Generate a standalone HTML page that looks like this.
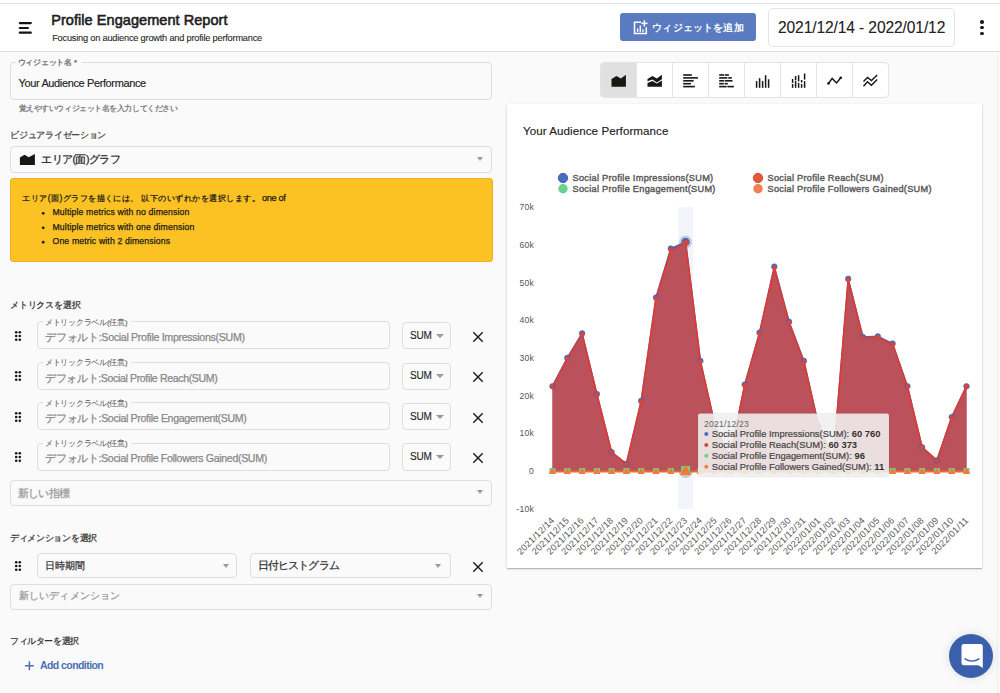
<!DOCTYPE html>
<html><head><meta charset="utf-8">
<style>
*{box-sizing:border-box;margin:0;padding:0}
html,body{width:1000px;height:693px;overflow:hidden}
body{background:#fafafa;font-family:"Liberation Sans",sans-serif;color:#222;position:relative}
.a{position:absolute}
.t{position:absolute;white-space:nowrap;line-height:1}
.box{position:absolute;border:1px solid #dedede;border-radius:4px}
.caret{position:absolute;width:0;height:0;border-left:4px solid transparent;border-right:4px solid transparent;border-top:4px solid #9a9a9a}
.dot{position:absolute;width:2.5px;height:2.5px;border-radius:50%;background:#1a1a1a}
</style></head><body>
<div class="a" style="left:0;top:0;width:1000px;height:52px;background:#fff"></div>
<div class="a" style="left:0;top:3px;width:1000px;height:1px;background:#e4e4e4"></div>
<div class="a" style="left:0;top:51px;width:1000px;height:1px;background:#dcdcdc"></div>
<svg class="a" style="left:0;top:0" width="50" height="50"><g stroke="#141414" stroke-width="2.2" stroke-linecap="round"><line x1="19.8" y1="23.1" x2="30.8" y2="23.1"/><line x1="19.8" y1="28" x2="27.9" y2="28"/><line x1="19.8" y1="32.7" x2="30.8" y2="32.7"/></g></svg>
<div class="t" style="left:51.2px;top:12.68px;font-size:14.5px;font-weight:400;color:#1f1f1f;letter-spacing:0.059px;-webkit-text-stroke:0.6px #1f1f1f;">Profile Engagement Report</div>
<div class="t" style="left:52.2px;top:34.28px;font-size:9.2px;font-weight:400;color:#2a2a2a;letter-spacing:-0.192px;-webkit-text-stroke:0.12px #2a2a2a;">Focusing on audience growth and profile performance</div>
<div class="a" style="left:620px;top:13px;width:136px;height:28px;background:#5a7bbf;border-radius:3px"></div>
<svg class="a" style="left:0;top:0" width="760" height="50"><g fill="none" stroke="#fff" stroke-width="1.5"><path d="M641 22.3H634.5V33.6H646.3V27.3"/></g><g fill="#fff"><rect x="643.6" y="20.3" width="1.5" height="6.2"/><rect x="641.3" y="22.6" width="6.2" height="1.5"/><rect x="636.9" y="28.5" width="1.4" height="3.4"/><rect x="639.6" y="25.6" width="1.4" height="6.3"/><rect x="642.3" y="29.3" width="1.4" height="2.6"/></g></svg>
<div class="t" style="left:652.2px;top:22.9px;font-size:10.0px;font-weight:700;color:#fff;letter-spacing:0.175px;">ウィジェットを追加</div>
<div class="box" style="left:768px;top:8px;width:187px;height:38.5px;background:#fff;border-color:#e4e4e4;border-radius:5px"></div>
<div class="t" style="left:778.0px;top:19.54px;font-size:15.6px;font-weight:400;color:#222;letter-spacing:-0.118px;-webkit-text-stroke:0.1px #222;">2021/12/14 - 2022/01/12</div>
<div class="a" style="left:980.3px;top:20.4px;width:3.4px;height:3.4px;border-radius:50%;background:#1e1e1e"></div>
<div class="a" style="left:980.3px;top:26px;width:3.4px;height:3.4px;border-radius:50%;background:#1e1e1e"></div>
<div class="a" style="left:980.3px;top:31.8px;width:3.4px;height:3.4px;border-radius:50%;background:#1e1e1e"></div>
<div class="a" style="left:997px;top:52px;width:1px;height:641px;background:#eeeeee"></div>
<div class="a" style="left:998px;top:52px;width:2px;height:641px;background:#fafafa"></div>
<div class="box" style="left:10px;top:62px;width:482px;height:38px"></div>
<div class="a" style="left:15.5px;top:60px;width:66px;height:5px;background:#fafafa"></div>
<div class="t" style="left:17.6px;top:58.9px;font-size:7.6px;font-weight:400;color:#666;letter-spacing:-0.225px;-webkit-text-stroke:0.25px #666;">ウィジェット名 *</div>
<div class="t" style="left:18.6px;top:77.65px;font-size:11.0px;font-weight:400;color:#222;letter-spacing:-0.375px;-webkit-text-stroke:0.15px #222;">Your Audience Performance</div>
<div class="t" style="left:18.6px;top:105.3px;font-size:7.8px;font-weight:400;color:#777;letter-spacing:-0.44px;-webkit-text-stroke:0.25px #777;">覚えやすいウィジェット名を入力してください</div>
<div class="t" style="left:10.4px;top:131.4px;font-size:8.6px;font-weight:400;color:#444;letter-spacing:-0.3px;-webkit-text-stroke:0.25px #444;">ビジュアライゼーション</div>
<div class="box" style="left:10px;top:146px;width:482px;height:27px"></div>
<svg class="a" style="left:0;top:140px" width="40" height="30"><polygon points="19.9,25 19.9,17.5 24.5,14.8 28.7,17.2 34.9,13.9 34.9,25" fill="#1a1712"/></svg>
<div class="t" style="left:41.4px;top:154.0px;font-size:10.5px;font-weight:400;color:#222;letter-spacing:-0.6px;-webkit-text-stroke:0.25px #222;">エリア(面)グラフ</div>
<div class="caret" style="left:476.8px;top:156.6px;border-left-width:3.7px;border-right-width:3.7px"></div>
<div class="a" style="left:10px;top:178px;width:483px;height:84px;background:#fcc224;border:1px solid #f3ad1c;border-radius:3px"></div>
<div class="t" style="left:22.25px;top:193.6px;font-size:8.3px;font-weight:400;color:#1a1a1a;letter-spacing:0.475px;-webkit-text-stroke:0.25px #1a1a1a;">エリア(面)グラフを描くには、</div>
<div class="t" style="left:141.2px;top:193.6px;font-size:8.3px;font-weight:400;color:#1a1a1a;letter-spacing:0.493px;-webkit-text-stroke:0.25px #1a1a1a;">以下のいずれかを選択します。</div>
<div class="t" style="left:262.0px;top:193.98px;font-size:9.2px;font-weight:400;color:#1a1a1a;letter-spacing:-0.35px;-webkit-text-stroke:0.25px #1a1a1a;">one of</div>
<svg class="a" style="left:0;top:200px" width="60" height="50"><circle cx="43.2" cy="13.300000000000011" r="1.35" fill="#1a1a1a"/><circle cx="43.2" cy="27.80000000000001" r="1.35" fill="#1a1a1a"/><circle cx="43.2" cy="42.19999999999999" r="1.35" fill="#1a1a1a"/></svg>
<div class="t" style="left:52.5px;top:208.35px;font-size:8.7px;font-weight:400;color:#1a1a1a;letter-spacing:0.136px;-webkit-text-stroke:0.25px #1a1a1a;">Multiple metrics with no dimension</div>
<div class="t" style="left:52.5px;top:222.91px;font-size:8.7px;font-weight:400;color:#1a1a1a;letter-spacing:0.136px;-webkit-text-stroke:0.25px #1a1a1a;">Multiple metrics with one dimension</div>
<div class="t" style="left:52.5px;top:237.3px;font-size:8.7px;font-weight:400;color:#1a1a1a;letter-spacing:0.136px;-webkit-text-stroke:0.25px #1a1a1a;">One metric with 2 dimensions</div>
<div class="t" style="left:10.0px;top:301.1px;font-size:8.8px;font-weight:400;color:#333;letter-spacing:-0.171px;-webkit-text-stroke:0.25px #333;">メトリクスを選択</div>
<svg class="a" style="left:7.70px;top:325.70px" width="20" height="20"><circle cx="8.2" cy="6.3" r="1.3" fill="#161616"/><circle cx="8.2" cy="10" r="1.3" fill="#161616"/><circle cx="8.2" cy="13.7" r="1.3" fill="#161616"/><circle cx="11.8" cy="6.3" r="1.3" fill="#161616"/><circle cx="11.8" cy="10" r="1.3" fill="#161616"/><circle cx="11.8" cy="13.7" r="1.3" fill="#161616"/></svg>
<div class="box" style="left:37px;top:321.4px;width:353px;height:28px"></div>
<div class="a" style="left:42.5px;top:320.2px;width:88px;height:4px;background:#fafafa"></div>
<div class="t" style="left:44.8px;top:318.8px;font-size:7.9px;font-weight:400;color:#555;letter-spacing:-0.219px;-webkit-text-stroke:0.05px #555;">メトリックラベル(任意)</div>
<div class="t" style="left:45.2px;top:332.19px;font-size:10.6px;font-weight:400;color:#888;letter-spacing:-0.295px;-webkit-text-stroke:0.25px #888;">デフォルト:Social Profile Impressions(SUM)</div>
<div class="box" style="left:402.3px;top:322.2px;width:48.7px;height:27.2px"></div>
<div class="t" style="left:410.0px;top:330.8px;font-size:10.0px;font-weight:400;color:#222;letter-spacing:-0.25px;-webkit-text-stroke:0.1px #222;">SUM</div>
<div class="caret" style="left:435.7px;top:333.8px"></div>
<svg class="a" style="left:471.5px;top:330.8px" width="12" height="12"><path d="M1.3 1.3L10.7 10.7M10.7 1.3L1.3 10.7" stroke="#1e1e1e" stroke-width="1.45"/></svg>
<svg class="a" style="left:7.70px;top:366.10px" width="20" height="20"><circle cx="8.2" cy="6.3" r="1.3" fill="#161616"/><circle cx="8.2" cy="10" r="1.3" fill="#161616"/><circle cx="8.2" cy="13.7" r="1.3" fill="#161616"/><circle cx="11.8" cy="6.3" r="1.3" fill="#161616"/><circle cx="11.8" cy="10" r="1.3" fill="#161616"/><circle cx="11.8" cy="13.7" r="1.3" fill="#161616"/></svg>
<div class="box" style="left:37px;top:361.8px;width:353px;height:28px"></div>
<div class="a" style="left:42.5px;top:360.6px;width:88px;height:4px;background:#fafafa"></div>
<div class="t" style="left:44.8px;top:359.2px;font-size:7.9px;font-weight:400;color:#555;letter-spacing:-0.219px;-webkit-text-stroke:0.05px #555;">メトリックラベル(任意)</div>
<div class="t" style="left:45.2px;top:372.59px;font-size:10.6px;font-weight:400;color:#888;letter-spacing:-0.379px;-webkit-text-stroke:0.25px #888;">デフォルト:Social Profile Reach(SUM)</div>
<div class="box" style="left:402.3px;top:362.6px;width:48.7px;height:27.2px"></div>
<div class="t" style="left:410.0px;top:371.2px;font-size:10.0px;font-weight:400;color:#222;letter-spacing:-0.25px;-webkit-text-stroke:0.1px #222;">SUM</div>
<div class="caret" style="left:435.7px;top:374.2px"></div>
<svg class="a" style="left:471.5px;top:371.2px" width="12" height="12"><path d="M1.3 1.3L10.7 10.7M10.7 1.3L1.3 10.7" stroke="#1e1e1e" stroke-width="1.45"/></svg>
<svg class="a" style="left:7.70px;top:406.50px" width="20" height="20"><circle cx="8.2" cy="6.3" r="1.3" fill="#161616"/><circle cx="8.2" cy="10" r="1.3" fill="#161616"/><circle cx="8.2" cy="13.7" r="1.3" fill="#161616"/><circle cx="11.8" cy="6.3" r="1.3" fill="#161616"/><circle cx="11.8" cy="10" r="1.3" fill="#161616"/><circle cx="11.8" cy="13.7" r="1.3" fill="#161616"/></svg>
<div class="box" style="left:37px;top:402.2px;width:353px;height:28px"></div>
<div class="a" style="left:42.5px;top:401.0px;width:88px;height:4px;background:#fafafa"></div>
<div class="t" style="left:44.8px;top:399.6px;font-size:7.9px;font-weight:400;color:#555;letter-spacing:-0.219px;-webkit-text-stroke:0.05px #555;">メトリックラベル(任意)</div>
<div class="t" style="left:45.2px;top:412.99px;font-size:10.6px;font-weight:400;color:#888;letter-spacing:-0.334px;-webkit-text-stroke:0.25px #888;">デフォルト:Social Profile Engagement(SUM)</div>
<div class="box" style="left:402.3px;top:403.0px;width:48.7px;height:27.2px"></div>
<div class="t" style="left:410.0px;top:411.6px;font-size:10.0px;font-weight:400;color:#222;letter-spacing:-0.25px;-webkit-text-stroke:0.1px #222;">SUM</div>
<div class="caret" style="left:435.7px;top:414.6px"></div>
<svg class="a" style="left:471.5px;top:411.6px" width="12" height="12"><path d="M1.3 1.3L10.7 10.7M10.7 1.3L1.3 10.7" stroke="#1e1e1e" stroke-width="1.45"/></svg>
<svg class="a" style="left:7.70px;top:446.90px" width="20" height="20"><circle cx="8.2" cy="6.3" r="1.3" fill="#161616"/><circle cx="8.2" cy="10" r="1.3" fill="#161616"/><circle cx="8.2" cy="13.7" r="1.3" fill="#161616"/><circle cx="11.8" cy="6.3" r="1.3" fill="#161616"/><circle cx="11.8" cy="10" r="1.3" fill="#161616"/><circle cx="11.8" cy="13.7" r="1.3" fill="#161616"/></svg>
<div class="box" style="left:37px;top:442.6px;width:353px;height:28px"></div>
<div class="a" style="left:42.5px;top:441.4px;width:88px;height:4px;background:#fafafa"></div>
<div class="t" style="left:44.8px;top:440.0px;font-size:7.9px;font-weight:400;color:#555;letter-spacing:-0.219px;-webkit-text-stroke:0.05px #555;">メトリックラベル(任意)</div>
<div class="t" style="left:45.2px;top:453.39px;font-size:10.6px;font-weight:400;color:#888;letter-spacing:-0.335px;-webkit-text-stroke:0.25px #888;">デフォルト:Social Profile Followers Gained(SUM)</div>
<div class="box" style="left:402.3px;top:443.4px;width:48.7px;height:27.2px"></div>
<div class="t" style="left:410.0px;top:452.0px;font-size:10.0px;font-weight:400;color:#222;letter-spacing:-0.25px;-webkit-text-stroke:0.1px #222;">SUM</div>
<div class="caret" style="left:435.7px;top:455.0px"></div>
<svg class="a" style="left:471.5px;top:452.0px" width="12" height="12"><path d="M1.3 1.3L10.7 10.7M10.7 1.3L1.3 10.7" stroke="#1e1e1e" stroke-width="1.45"/></svg>
<div class="box" style="left:10px;top:480px;width:482px;height:26px"></div>
<div class="t" style="left:18.4px;top:487.5px;font-size:10.5px;font-weight:400;color:#999;letter-spacing:-0.95px;-webkit-text-stroke:0.25px #999;">新しい指標</div>
<div class="caret" style="left:476.8px;top:490.4px;border-left-width:3.7px;border-right-width:3.7px"></div>
<div class="t" style="left:10.0px;top:533.6px;font-size:8.8px;font-weight:400;color:#333;letter-spacing:-0.312px;-webkit-text-stroke:0.25px #333;">ディメンションを選択</div>
<svg class="a" style="left:7.70px;top:556.00px" width="20" height="20"><circle cx="8.2" cy="6.3" r="1.3" fill="#161616"/><circle cx="8.2" cy="10" r="1.3" fill="#161616"/><circle cx="8.2" cy="13.7" r="1.3" fill="#161616"/><circle cx="11.8" cy="6.3" r="1.3" fill="#161616"/><circle cx="11.8" cy="10" r="1.3" fill="#161616"/><circle cx="11.8" cy="13.7" r="1.3" fill="#161616"/></svg>
<div class="box" style="left:37.4px;top:552.6px;width:200px;height:25.8px"></div>
<div class="t" style="left:44.8px;top:560.5px;font-size:10.2px;font-weight:400;color:#333;letter-spacing:0.066px;-webkit-text-stroke:0.25px #333;">日時期間</div>
<div class="caret" style="left:222.7px;top:563.8px;border-left-width:3.7px;border-right-width:3.7px"></div>
<div class="box" style="left:249.5px;top:552.5px;width:201.5px;height:25.8px"></div>
<div class="t" style="left:257.5px;top:560.0px;font-size:10.5px;font-weight:400;color:#333;letter-spacing:-0.815px;-webkit-text-stroke:0.25px #333;">日付ヒストグラム</div>
<div class="caret" style="left:435.4px;top:563.8px;border-left-width:3.7px;border-right-width:3.7px"></div>
<svg class="a" style="left:471.5px;top:560.6px" width="12" height="12"><path d="M1.3 1.3L10.7 10.7M10.7 1.3L1.3 10.7" stroke="#1e1e1e" stroke-width="1.45"/></svg>
<div class="box" style="left:10px;top:583.5px;width:482px;height:26px"></div>
<div class="t" style="left:18.8px;top:591.0px;font-size:10.2px;font-weight:400;color:#999;letter-spacing:0.156px;-webkit-text-stroke:0.25px #999;">新しいディメンション</div>
<div class="caret" style="left:476.8px;top:594px;border-left-width:3.7px;border-right-width:3.7px"></div>
<div class="t" style="left:10.0px;top:637.2px;font-size:8.8px;font-weight:400;color:#333;letter-spacing:-0.4px;-webkit-text-stroke:0.25px #333;">フィルターを選択</div>
<svg class="a" style="left:20px;top:657px" width="20" height="20"><path d="M9.4 4.2V13.2M4.9 8.7H13.9" stroke="#4a6fb5" stroke-width="1.5"/></svg>
<div class="t" style="left:40.0px;top:660.28px;font-size:10.5px;font-weight:700;color:#4a6fb5;letter-spacing:-0.567px;">Add condition</div>
<div class="a" style="left:600px;top:62px;width:288.5px;height:36.3px;background:#fff;border:1px solid #e3e3e3;border-radius:4px;overflow:hidden"><div style="position:absolute;left:0;top:0;width:36px;height:35px;background:#e0e0e0"></div>
<div style="position:absolute;left:35px;top:0;width:1px;height:35px;background:#e4e4e4"></div>
<div style="position:absolute;left:71px;top:0;width:1px;height:35px;background:#e4e4e4"></div>
<div style="position:absolute;left:107px;top:0;width:1px;height:35px;background:#e4e4e4"></div>
<div style="position:absolute;left:143px;top:0;width:1px;height:35px;background:#e4e4e4"></div>
<div style="position:absolute;left:179px;top:0;width:1px;height:35px;background:#e4e4e4"></div>
<div style="position:absolute;left:215px;top:0;width:1px;height:35px;background:#e4e4e4"></div>
<div style="position:absolute;left:251px;top:0;width:1px;height:35px;background:#e4e4e4"></div>
</div>
<svg class="a" style="left:0;top:0" width="1000" height="100" viewBox="0 0 1000 100">
<polygon points="611.5,86.7 611.5,78.9 616.4,75.9 620.9,78.6 625.9,74.8 625.9,86.7" fill="#1a1712"/>
<polygon points="647.5,78.9 652.4,75.9 656.9,78.6 661.9,74.8 661.9,79.3 656.9,82.6 652.4,79.5 647.5,81.3" fill="#1a1712"/>
<polygon points="647.5,83.1 652.4,81.1 656.9,83.6 661.9,80.6 661.9,86.7 647.5,86.7" fill="#1a1712"/>
<rect x="683.2" y="74.2" width="8.6" height="1.6" fill="#1a1712"/>
<rect x="683.2" y="77.1" width="14.7" height="1.6" fill="#1a1712"/>
<rect x="683.2" y="80.0" width="10.4" height="1.6" fill="#1a1712"/>
<rect x="683.2" y="82.9" width="7.7" height="1.6" fill="#1a1712"/>
<rect x="683.2" y="85.8" width="11.7" height="1.6" fill="#1a1712"/>
<rect x="719.2" y="74.2" width="5.0" height="1.6" fill="#1a1712"/>
<rect x="724.9" y="74.2" width="4.0" height="1.6" fill="#1a1712"/>
<rect x="719.2" y="77.1" width="8.2" height="1.6" fill="#1a1712"/>
<rect x="728.2" y="77.1" width="3.6" height="1.6" fill="#1a1712"/>
<rect x="719.2" y="80.0" width="5.0" height="1.6" fill="#1a1712"/>
<rect x="724.9" y="80.0" width="7.6" height="1.6" fill="#1a1712"/>
<rect x="719.2" y="82.9" width="4.6" height="1.6" fill="#1a1712"/>
<rect x="724.6" y="82.9" width="3.2" height="1.6" fill="#1a1712"/>
<rect x="719.2" y="85.8" width="7.5" height="1.6" fill="#1a1712"/>
<rect x="727.4" y="85.8" width="6.5" height="1.6" fill="#1a1712"/>
<rect x="755.85" y="81.1" width="1.5" height="6.7" fill="#1a1712"/>
<rect x="758.85" y="78.2" width="1.5" height="9.6" fill="#1a1712"/>
<rect x="761.85" y="81.1" width="1.5" height="6.7" fill="#1a1712"/>
<rect x="764.85" y="75.2" width="1.5" height="12.6" fill="#1a1712"/>
<rect x="767.85" y="79.3" width="1.5" height="8.5" fill="#1a1712"/>
<rect x="791.85" y="78.9" width="1.5" height="4.0" fill="#1a1712"/>
<rect x="791.85" y="84" width="1.5" height="3.8" fill="#1a1712"/>
<rect x="794.85" y="76" width="1.5" height="4.4" fill="#1a1712"/>
<rect x="794.85" y="81.1" width="1.5" height="6.7" fill="#1a1712"/>
<rect x="797.85" y="75.2" width="1.5" height="6.2" fill="#1a1712"/>
<rect x="797.85" y="82.9" width="1.5" height="4.9" fill="#1a1712"/>
<rect x="800.85" y="80" width="1.5" height="2.5" fill="#1a1712"/>
<rect x="800.85" y="84" width="1.5" height="3.8" fill="#1a1712"/>
<rect x="803.85" y="73.5" width="1.5" height="6.1" fill="#1a1712"/>
<rect x="803.85" y="81.1" width="1.5" height="6.7" fill="#1a1712"/>
<polyline points="828.4,83.5 832.2,78.4 836.5,82.9 840.8,77.7" fill="none" stroke="#1a1712" stroke-width="1.5"/>
<circle cx="828.4" cy="83.5" r="1.3" fill="#1a1712"/><circle cx="840.8" cy="77.7" r="1.3" fill="#1a1712"/>
<polyline points="863.5,81.6 867.5,77.5 871.4,80.6 877.2,75.1" fill="none" stroke="#1a1712" stroke-width="1.4"/>
<polyline points="863.5,86.3 867.5,81.8 871.4,85.2 877.2,79.5" fill="none" stroke="#1a1712" stroke-width="1.4"/>
</svg>
<div class="a" style="left:506.5px;top:104px;width:475.5px;height:464.2px;background:#fff;box-shadow:0 1px 1px 0 rgba(0,0,0,.2),0 1px 3px 0 rgba(0,0,0,.12)"></div>
<div class="t" style="left:523.0px;top:124.94px;font-size:11.6px;font-weight:400;color:#222;letter-spacing:0.058px;-webkit-text-stroke:0.15px #222;">Your Audience Performance</div>
<svg class="a" style="left:0;top:0" width="1000" height="693" viewBox="0 0 1000 693">
<rect x="678" y="207" width="15" height="302" fill="#f2f6fb"/>
<text x="534" y="210.0" text-anchor="end" font-size="8.6" fill="#555" letter-spacing="0.25">70k</text>
<text x="534" y="247.7" text-anchor="end" font-size="8.6" fill="#555" letter-spacing="0.25">60k</text>
<text x="534" y="285.5" text-anchor="end" font-size="8.6" fill="#555" letter-spacing="0.25">50k</text>
<text x="534" y="323.2" text-anchor="end" font-size="8.6" fill="#555" letter-spacing="0.25">40k</text>
<text x="534" y="360.9" text-anchor="end" font-size="8.6" fill="#555" letter-spacing="0.25">30k</text>
<text x="534" y="398.6" text-anchor="end" font-size="8.6" fill="#555" letter-spacing="0.25">20k</text>
<text x="534" y="436.3" text-anchor="end" font-size="8.6" fill="#555" letter-spacing="0.25">10k</text>
<text x="534" y="474.0" text-anchor="end" font-size="8.6" fill="#555" letter-spacing="0.25">0</text>
<text x="534" y="511.7" text-anchor="end" font-size="8.6" fill="#555" letter-spacing="0.25">-10k</text>
<polygon points="552.5,471 552.5,386.2 567.3,357.9 582.1,333.4 596.9,394.1 611.6,452.1 626.4,463.8 641.2,400.9 656.0,297.5 670.8,248.5 685.6,241.9 700.4,360.9 715.1,425.7 729.9,457.8 744.7,384.6 759.5,332.6 774.3,266.6 789.1,321.7 803.9,360.9 818.6,425.7 833.4,458.9 848.2,278.7 863.0,337.1 877.8,336.4 892.6,343.5 907.4,386.2 922.1,447.2 936.9,460.4 951.7,417.1 966.5,386.2 966.5,471" fill="#bb525b"/>
<polyline points="552.5,386.2 567.3,357.9 582.1,333.4 596.9,394.1 611.6,452.1 626.4,463.8 641.2,400.9 656.0,297.5 670.8,248.5 685.6,241.9 700.4,360.9 715.1,425.7 729.9,457.8 744.7,384.6 759.5,332.6 774.3,266.6 789.1,321.7 803.9,360.9 818.6,425.7 833.4,458.9 848.2,278.7 863.0,337.1 877.8,336.4 892.6,343.5 907.4,386.2 922.1,447.2 936.9,460.4 951.7,417.1 966.5,386.2" fill="none" stroke="#4a6cc0" stroke-width="1.6"/>
<polygon points="552.5,471 552.5,386.7 567.3,358.7 582.1,334.3 596.9,394.6 611.6,452.3 626.4,463.9 641.2,401.4 656.0,298.7 670.8,250.1 685.6,243.3 700.4,361.7 715.1,426.1 729.9,457.9 744.7,385.2 759.5,333.6 774.3,268.0 789.1,322.7 803.9,361.7 818.6,426.1 833.4,459.0 848.2,280.0 863.0,338.1 877.8,337.3 892.6,344.4 907.4,386.7 922.1,447.4 936.9,460.5 951.7,417.5 966.5,386.7 966.5,471" fill="#bb525b"/>
<polyline points="552.5,386.7 567.3,358.7 582.1,334.3 596.9,394.6 611.6,452.3 626.4,463.9 641.2,401.4 656.0,298.7 670.8,250.1 685.6,243.3 700.4,361.7 715.1,426.1 729.9,457.9 744.7,385.2 759.5,333.6 774.3,268.0 789.1,322.7 803.9,361.7 818.6,426.1 833.4,459.0 848.2,280.0 863.0,338.1 877.8,337.3 892.6,344.4 907.4,386.7 922.1,447.4 936.9,460.5 951.7,417.5 966.5,386.7" fill="none" stroke="#e0392e" stroke-width="1.6"/>
<circle cx="552.5" cy="386.2" r="2.8" fill="#4a6cc0" stroke="#3d5ba8" stroke-width="0.5"/>
<circle cx="567.3" cy="357.9" r="2.8" fill="#4a6cc0" stroke="#3d5ba8" stroke-width="0.5"/>
<circle cx="582.1" cy="333.4" r="2.8" fill="#4a6cc0" stroke="#3d5ba8" stroke-width="0.5"/>
<circle cx="596.9" cy="394.1" r="2.8" fill="#4a6cc0" stroke="#3d5ba8" stroke-width="0.5"/>
<circle cx="611.6" cy="452.1" r="2.8" fill="#4a6cc0" stroke="#3d5ba8" stroke-width="0.5"/>
<circle cx="626.4" cy="463.8" r="2.8" fill="#4a6cc0" stroke="#3d5ba8" stroke-width="0.5"/>
<circle cx="641.2" cy="400.9" r="2.8" fill="#4a6cc0" stroke="#3d5ba8" stroke-width="0.5"/>
<circle cx="656.0" cy="297.5" r="2.8" fill="#4a6cc0" stroke="#3d5ba8" stroke-width="0.5"/>
<circle cx="670.8" cy="248.5" r="2.8" fill="#4a6cc0" stroke="#3d5ba8" stroke-width="0.5"/>
<circle cx="700.4" cy="360.9" r="2.8" fill="#4a6cc0" stroke="#3d5ba8" stroke-width="0.5"/>
<circle cx="715.1" cy="425.7" r="2.8" fill="#4a6cc0" stroke="#3d5ba8" stroke-width="0.5"/>
<circle cx="729.9" cy="457.8" r="2.8" fill="#4a6cc0" stroke="#3d5ba8" stroke-width="0.5"/>
<circle cx="744.7" cy="384.6" r="2.8" fill="#4a6cc0" stroke="#3d5ba8" stroke-width="0.5"/>
<circle cx="759.5" cy="332.6" r="2.8" fill="#4a6cc0" stroke="#3d5ba8" stroke-width="0.5"/>
<circle cx="774.3" cy="266.6" r="2.8" fill="#4a6cc0" stroke="#3d5ba8" stroke-width="0.5"/>
<circle cx="789.1" cy="321.7" r="2.8" fill="#4a6cc0" stroke="#3d5ba8" stroke-width="0.5"/>
<circle cx="803.9" cy="360.9" r="2.8" fill="#4a6cc0" stroke="#3d5ba8" stroke-width="0.5"/>
<circle cx="818.6" cy="425.7" r="2.8" fill="#4a6cc0" stroke="#3d5ba8" stroke-width="0.5"/>
<circle cx="833.4" cy="458.9" r="2.8" fill="#4a6cc0" stroke="#3d5ba8" stroke-width="0.5"/>
<circle cx="848.2" cy="278.7" r="2.8" fill="#4a6cc0" stroke="#3d5ba8" stroke-width="0.5"/>
<circle cx="863.0" cy="337.1" r="2.8" fill="#4a6cc0" stroke="#3d5ba8" stroke-width="0.5"/>
<circle cx="877.8" cy="336.4" r="2.8" fill="#4a6cc0" stroke="#3d5ba8" stroke-width="0.5"/>
<circle cx="892.6" cy="343.5" r="2.8" fill="#4a6cc0" stroke="#3d5ba8" stroke-width="0.5"/>
<circle cx="907.4" cy="386.2" r="2.8" fill="#4a6cc0" stroke="#3d5ba8" stroke-width="0.5"/>
<circle cx="922.1" cy="447.2" r="2.8" fill="#4a6cc0" stroke="#3d5ba8" stroke-width="0.5"/>
<circle cx="936.9" cy="460.4" r="2.8" fill="#4a6cc0" stroke="#3d5ba8" stroke-width="0.5"/>
<circle cx="951.7" cy="417.1" r="2.8" fill="#4a6cc0" stroke="#3d5ba8" stroke-width="0.5"/>
<circle cx="966.5" cy="386.2" r="2.8" fill="#4a6cc0" stroke="#3d5ba8" stroke-width="0.5"/>
<polygon points="552.5,383.7 555.5,386.7 552.5,389.7 549.5,386.7" fill="#dc4535"/>
<polygon points="567.3,355.7 570.3,358.7 567.3,361.7 564.3,358.7" fill="#dc4535"/>
<polygon points="582.1,331.3 585.1,334.3 582.1,337.3 579.1,334.3" fill="#dc4535"/>
<polygon points="596.9,391.6 599.9,394.6 596.9,397.6 593.9,394.6" fill="#dc4535"/>
<polygon points="611.6,449.3 614.6,452.3 611.6,455.3 608.6,452.3" fill="#dc4535"/>
<polygon points="626.4,460.9 629.4,463.9 626.4,466.9 623.4,463.9" fill="#dc4535"/>
<polygon points="641.2,398.4 644.2,401.4 641.2,404.4 638.2,401.4" fill="#dc4535"/>
<polygon points="656.0,295.7 659.0,298.7 656.0,301.7 653.0,298.7" fill="#dc4535"/>
<polygon points="670.8,247.1 673.8,250.1 670.8,253.1 667.8,250.1" fill="#dc4535"/>
<polygon points="700.4,358.7 703.4,361.7 700.4,364.7 697.4,361.7" fill="#dc4535"/>
<polygon points="715.1,423.1 718.1,426.1 715.1,429.1 712.1,426.1" fill="#dc4535"/>
<polygon points="729.9,454.9 732.9,457.9 729.9,460.9 726.9,457.9" fill="#dc4535"/>
<polygon points="744.7,382.2 747.7,385.2 744.7,388.2 741.7,385.2" fill="#dc4535"/>
<polygon points="759.5,330.6 762.5,333.6 759.5,336.6 756.5,333.6" fill="#dc4535"/>
<polygon points="774.3,265.0 777.3,268.0 774.3,271.0 771.3,268.0" fill="#dc4535"/>
<polygon points="789.1,319.7 792.1,322.7 789.1,325.7 786.1,322.7" fill="#dc4535"/>
<polygon points="803.9,358.7 806.9,361.7 803.9,364.7 800.9,361.7" fill="#dc4535"/>
<polygon points="818.6,423.1 821.6,426.1 818.6,429.1 815.6,426.1" fill="#dc4535"/>
<polygon points="833.4,456.0 836.4,459.0 833.4,462.0 830.4,459.0" fill="#dc4535"/>
<polygon points="848.2,277.0 851.2,280.0 848.2,283.0 845.2,280.0" fill="#dc4535"/>
<polygon points="863.0,335.1 866.0,338.1 863.0,341.1 860.0,338.1" fill="#dc4535"/>
<polygon points="877.8,334.3 880.8,337.3 877.8,340.3 874.8,337.3" fill="#dc4535"/>
<polygon points="892.6,341.4 895.6,344.4 892.6,347.4 889.6,344.4" fill="#dc4535"/>
<polygon points="907.4,383.7 910.4,386.7 907.4,389.7 904.4,386.7" fill="#dc4535"/>
<polygon points="922.1,444.4 925.1,447.4 922.1,450.4 919.1,447.4" fill="#dc4535"/>
<polygon points="936.9,457.5 939.9,460.5 936.9,463.5 933.9,460.5" fill="#dc4535"/>
<polygon points="951.7,414.5 954.7,417.5 951.7,420.5 948.7,417.5" fill="#dc4535"/>
<polygon points="966.5,383.7 969.5,386.7 966.5,389.7 963.5,386.7" fill="#dc4535"/>
<circle cx="685.6" cy="241.9" r="6.5" fill="rgba(110,110,140,0.3)"/>
<circle cx="685.6" cy="241.9" r="4.2" fill="#4a6cc0"/>
<polygon points="685.6,239.3 689.6,243.3 685.6,247.3 681.6,243.3" fill="#dc4535"/>
<line x1="552.5" y1="471.5" x2="966.5" y2="471.5" stroke="#f06a2a" stroke-width="2"/>
<rect x="549.5" y="468" width="6" height="6" fill="#6ad38a"/>
<polygon points="552.5,467.5 556.1,474 548.9,474" fill="#f5773a"/>
<rect x="564.3" y="468" width="6" height="6" fill="#6ad38a"/>
<polygon points="567.3,467.5 570.9,474 563.7,474" fill="#f5773a"/>
<rect x="579.1" y="468" width="6" height="6" fill="#6ad38a"/>
<polygon points="582.1,467.5 585.7,474 578.5,474" fill="#f5773a"/>
<rect x="593.9" y="468" width="6" height="6" fill="#6ad38a"/>
<polygon points="596.9,467.5 600.5,474 593.3,474" fill="#f5773a"/>
<rect x="608.6" y="468" width="6" height="6" fill="#6ad38a"/>
<polygon points="611.6,467.5 615.2,474 608.0,474" fill="#f5773a"/>
<rect x="623.4" y="468" width="6" height="6" fill="#6ad38a"/>
<polygon points="626.4,467.5 630.0,474 622.8,474" fill="#f5773a"/>
<rect x="638.2" y="468" width="6" height="6" fill="#6ad38a"/>
<polygon points="641.2,467.5 644.8,474 637.6,474" fill="#f5773a"/>
<rect x="653.0" y="468" width="6" height="6" fill="#6ad38a"/>
<polygon points="656.0,467.5 659.6,474 652.4,474" fill="#f5773a"/>
<rect x="667.8" y="468" width="6" height="6" fill="#6ad38a"/>
<polygon points="670.8,467.5 674.4,474 667.2,474" fill="#f5773a"/>
<circle cx="685.6" cy="471" r="7" fill="rgba(120,120,120,0.35)"/>
<rect x="681.1" y="466" width="9" height="9" fill="#7fc97f"/>
<polygon points="685.6,464.5 691.1,475 680.1,475" fill="#f07a35"/>
<rect x="697.4" y="468" width="6" height="6" fill="#6ad38a"/>
<polygon points="700.4,467.5 704.0,474 696.8,474" fill="#f5773a"/>
<rect x="712.1" y="468" width="6" height="6" fill="#6ad38a"/>
<polygon points="715.1,467.5 718.7,474 711.5,474" fill="#f5773a"/>
<rect x="726.9" y="468" width="6" height="6" fill="#6ad38a"/>
<polygon points="729.9,467.5 733.5,474 726.3,474" fill="#f5773a"/>
<rect x="741.7" y="468" width="6" height="6" fill="#6ad38a"/>
<polygon points="744.7,467.5 748.3,474 741.1,474" fill="#f5773a"/>
<rect x="756.5" y="468" width="6" height="6" fill="#6ad38a"/>
<polygon points="759.5,467.5 763.1,474 755.9,474" fill="#f5773a"/>
<rect x="771.3" y="468" width="6" height="6" fill="#6ad38a"/>
<polygon points="774.3,467.5 777.9,474 770.7,474" fill="#f5773a"/>
<rect x="786.1" y="468" width="6" height="6" fill="#6ad38a"/>
<polygon points="789.1,467.5 792.7,474 785.5,474" fill="#f5773a"/>
<rect x="800.9" y="468" width="6" height="6" fill="#6ad38a"/>
<polygon points="803.9,467.5 807.5,474 800.3,474" fill="#f5773a"/>
<rect x="815.6" y="468" width="6" height="6" fill="#6ad38a"/>
<polygon points="818.6,467.5 822.2,474 815.0,474" fill="#f5773a"/>
<rect x="830.4" y="468" width="6" height="6" fill="#6ad38a"/>
<polygon points="833.4,467.5 837.0,474 829.8,474" fill="#f5773a"/>
<rect x="845.2" y="468" width="6" height="6" fill="#6ad38a"/>
<polygon points="848.2,467.5 851.8,474 844.6,474" fill="#f5773a"/>
<rect x="860.0" y="468" width="6" height="6" fill="#6ad38a"/>
<polygon points="863.0,467.5 866.6,474 859.4,474" fill="#f5773a"/>
<rect x="874.8" y="468" width="6" height="6" fill="#6ad38a"/>
<polygon points="877.8,467.5 881.4,474 874.2,474" fill="#f5773a"/>
<rect x="889.6" y="468" width="6" height="6" fill="#6ad38a"/>
<polygon points="892.6,467.5 896.2,474 889.0,474" fill="#f5773a"/>
<rect x="904.4" y="468" width="6" height="6" fill="#6ad38a"/>
<polygon points="907.4,467.5 911.0,474 903.8,474" fill="#f5773a"/>
<rect x="919.1" y="468" width="6" height="6" fill="#6ad38a"/>
<polygon points="922.1,467.5 925.8,474 918.5,474" fill="#f5773a"/>
<rect x="933.9" y="468" width="6" height="6" fill="#6ad38a"/>
<polygon points="936.9,467.5 940.5,474 933.3,474" fill="#f5773a"/>
<rect x="948.7" y="468" width="6" height="6" fill="#6ad38a"/>
<polygon points="951.7,467.5 955.3,474 948.1,474" fill="#f5773a"/>
<rect x="963.5" y="468" width="6" height="6" fill="#6ad38a"/>
<polygon points="966.5,467.5 970.1,474 962.9,474" fill="#f5773a"/>
<text transform="translate(555.0,521) rotate(-45)" text-anchor="end" font-size="9.2" fill="#5a5a5a" letter-spacing="0.25">2021/12/14</text>
<text transform="translate(569.8,521) rotate(-45)" text-anchor="end" font-size="9.2" fill="#5a5a5a" letter-spacing="0.25">2021/12/15</text>
<text transform="translate(584.6,521) rotate(-45)" text-anchor="end" font-size="9.2" fill="#5a5a5a" letter-spacing="0.25">2021/12/16</text>
<text transform="translate(599.4,521) rotate(-45)" text-anchor="end" font-size="9.2" fill="#5a5a5a" letter-spacing="0.25">2021/12/17</text>
<text transform="translate(614.1,521) rotate(-45)" text-anchor="end" font-size="9.2" fill="#5a5a5a" letter-spacing="0.25">2021/12/18</text>
<text transform="translate(628.9,521) rotate(-45)" text-anchor="end" font-size="9.2" fill="#5a5a5a" letter-spacing="0.25">2021/12/19</text>
<text transform="translate(643.7,521) rotate(-45)" text-anchor="end" font-size="9.2" fill="#5a5a5a" letter-spacing="0.25">2021/12/20</text>
<text transform="translate(658.5,521) rotate(-45)" text-anchor="end" font-size="9.2" fill="#5a5a5a" letter-spacing="0.25">2021/12/21</text>
<text transform="translate(673.3,521) rotate(-45)" text-anchor="end" font-size="9.2" fill="#5a5a5a" letter-spacing="0.25">2021/12/22</text>
<text transform="translate(688.1,521) rotate(-45)" text-anchor="end" font-size="9.2" fill="#5a5a5a" letter-spacing="0.25">2021/12/23</text>
<text transform="translate(702.9,521) rotate(-45)" text-anchor="end" font-size="9.2" fill="#5a5a5a" letter-spacing="0.25">2021/12/24</text>
<text transform="translate(717.6,521) rotate(-45)" text-anchor="end" font-size="9.2" fill="#5a5a5a" letter-spacing="0.25">2021/12/25</text>
<text transform="translate(732.4,521) rotate(-45)" text-anchor="end" font-size="9.2" fill="#5a5a5a" letter-spacing="0.25">2021/12/26</text>
<text transform="translate(747.2,521) rotate(-45)" text-anchor="end" font-size="9.2" fill="#5a5a5a" letter-spacing="0.25">2021/12/27</text>
<text transform="translate(762.0,521) rotate(-45)" text-anchor="end" font-size="9.2" fill="#5a5a5a" letter-spacing="0.25">2021/12/28</text>
<text transform="translate(776.8,521) rotate(-45)" text-anchor="end" font-size="9.2" fill="#5a5a5a" letter-spacing="0.25">2021/12/29</text>
<text transform="translate(791.6,521) rotate(-45)" text-anchor="end" font-size="9.2" fill="#5a5a5a" letter-spacing="0.25">2021/12/30</text>
<text transform="translate(806.4,521) rotate(-45)" text-anchor="end" font-size="9.2" fill="#5a5a5a" letter-spacing="0.25">2021/12/31</text>
<text transform="translate(821.1,521) rotate(-45)" text-anchor="end" font-size="9.2" fill="#5a5a5a" letter-spacing="0.25">2022/01/01</text>
<text transform="translate(835.9,521) rotate(-45)" text-anchor="end" font-size="9.2" fill="#5a5a5a" letter-spacing="0.25">2022/01/02</text>
<text transform="translate(850.7,521) rotate(-45)" text-anchor="end" font-size="9.2" fill="#5a5a5a" letter-spacing="0.25">2022/01/03</text>
<text transform="translate(865.5,521) rotate(-45)" text-anchor="end" font-size="9.2" fill="#5a5a5a" letter-spacing="0.25">2022/01/04</text>
<text transform="translate(880.3,521) rotate(-45)" text-anchor="end" font-size="9.2" fill="#5a5a5a" letter-spacing="0.25">2022/01/05</text>
<text transform="translate(895.1,521) rotate(-45)" text-anchor="end" font-size="9.2" fill="#5a5a5a" letter-spacing="0.25">2022/01/06</text>
<text transform="translate(909.9,521) rotate(-45)" text-anchor="end" font-size="9.2" fill="#5a5a5a" letter-spacing="0.25">2022/01/07</text>
<text transform="translate(924.6,521) rotate(-45)" text-anchor="end" font-size="9.2" fill="#5a5a5a" letter-spacing="0.25">2022/01/08</text>
<text transform="translate(939.4,521) rotate(-45)" text-anchor="end" font-size="9.2" fill="#5a5a5a" letter-spacing="0.25">2022/01/09</text>
<text transform="translate(954.2,521) rotate(-45)" text-anchor="end" font-size="9.2" fill="#5a5a5a" letter-spacing="0.25">2022/01/10</text>
<text transform="translate(969.0,521) rotate(-45)" text-anchor="end" font-size="9.2" fill="#5a5a5a" letter-spacing="0.25">2022/01/11</text>
<circle cx="563" cy="178" r="4.7" fill="#4a6cc0" stroke="#3b5aa3" stroke-width="0.9"/>
<text x="572.5" y="181.4" font-size="9.2" fill="#585858" stroke="#585858" stroke-width="0.4" letter-spacing="0.28">Social Profile Impressions(SUM)</text>
<circle cx="758" cy="178" r="4.7" fill="#e05a3a" stroke="#c84a30" stroke-width="0.9"/>
<text x="767.5" y="181.4" font-size="9.2" fill="#585858" stroke="#585858" stroke-width="0.4" letter-spacing="0.28">Social Profile Reach(SUM)</text>
<circle cx="563" cy="188.7" r="4.7" fill="#6ad38a"/>
<text x="572.5" y="192.1" font-size="9.2" fill="#585858" stroke="#585858" stroke-width="0.4" letter-spacing="0.28">Social Profile Engagement(SUM)</text>
<circle cx="758" cy="188.7" r="4.7" fill="#f47c50"/>
<text x="767.5" y="192.1" font-size="9.2" fill="#585858" stroke="#585858" stroke-width="0.4" letter-spacing="0.28">Social Profile Followers Gained(SUM)</text>
<rect x="698" y="413.5" width="191" height="63.5" rx="2" fill="rgba(239,239,239,0.89)" stroke="rgba(0,0,0,0.04)"/>
<text x="704" y="426.7" font-size="8.6" fill="#666" letter-spacing="0.2">2021/12/23</text>
<circle cx="706.3" cy="434.0" r="2" fill="#4a6cc0"/>
<text x="711.7" y="437.3" font-size="9.4" fill="#444" stroke="#444" stroke-width="0.2">Social Profile Impressions(SUM): <tspan font-weight="700" fill="#333" stroke-width="0">60 760</tspan></text>
<circle cx="706.3" cy="444.9" r="2" fill="#d04a3a"/>
<text x="711.7" y="448.2" font-size="9.4" fill="#444" stroke="#444" stroke-width="0.2">Social Profile Reach(SUM): <tspan font-weight="700" fill="#333" stroke-width="0">60 373</tspan></text>
<circle cx="706.3" cy="455.8" r="2" fill="#6ad38a"/>
<text x="711.7" y="459.1" font-size="9.4" fill="#444" stroke="#444" stroke-width="0.2">Social Profile Engagement(SUM): <tspan font-weight="700" fill="#333" stroke-width="0">96</tspan></text>
<circle cx="706.3" cy="466.7" r="2" fill="#f47c50"/>
<text x="711.7" y="470.0" font-size="9.4" fill="#444" stroke="#444" stroke-width="0.2">Social Profile Followers Gained(SUM): <tspan font-weight="700" fill="#333" stroke-width="0">11</tspan></text>
</svg>
<div class="a" style="left:949.4px;top:633.8px;width:44px;height:44px;border-radius:50%;background:#3a60ad;box-shadow:0 0 10px rgba(0,0,0,.12)"></div>
<svg class="a" style="left:949.5px;top:634px" width="44" height="44"><path d="M13.8 10H30.4Q32.8 10 32.8 12.4V33.9L28.3 31.3H13.8Q11.5 31.3 11.5 28.9V12.4Q11.5 10 13.8 10Z" fill="#fff"/><path d="M14.6 24.6Q21.9 29.6 29.5 24.6" fill="none" stroke="#3a60ad" stroke-width="1.3"/></svg>
</body></html>
